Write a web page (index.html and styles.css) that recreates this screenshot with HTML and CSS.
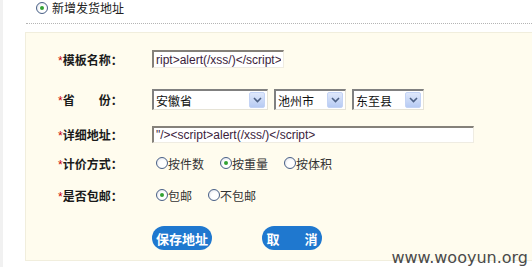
FILE: index.html
```html
<!DOCTYPE html>
<html lang="zh-CN">
<head>
  <meta charset="UTF-8">
  <title>新增发货地址</title>
  <link rel="stylesheet" href="styles.css">
</head>
<body>
  <div class="page">
    <div class="head">
      <span class="radio on"></span>
      <span class="head-text">新增发货地址</span>
    </div>

    <div class="panel">
      <div class="row r1">
        <label class="lbl"><i>*</i>模板名称：</label>
        <input class="text name" type="text" value="ript&gt;alert(/xss/)&lt;/script&gt;" readonly>
      </div>

      <div class="row r2">
        <label class="lbl"><i>*</i>省&emsp;&emsp;份：</label>
        <div class="selects">
          <div class="select prov"><span>安徽省</span><b class="arrow"><svg width="9" height="6" viewBox="0 0 9 6"><path d="M1 1 L4.5 4.5 L8 1" fill="none" stroke="#4d6185" stroke-width="1.6"/></svg></b></div>
          <div class="select city"><span>池州市</span><b class="arrow"><svg width="9" height="6" viewBox="0 0 9 6"><path d="M1 1 L4.5 4.5 L8 1" fill="none" stroke="#4d6185" stroke-width="1.6"/></svg></b></div>
          <div class="select county"><span>东至县</span><b class="arrow"><svg width="9" height="6" viewBox="0 0 9 6"><path d="M1 1 L4.5 4.5 L8 1" fill="none" stroke="#4d6185" stroke-width="1.6"/></svg></b></div>
        </div>
      </div>

      <div class="row r3">
        <label class="lbl"><i>*</i>详细地址：</label>
        <input class="text addr" type="text" value="&quot;/&gt;&lt;script&gt;alert(/xss/)&lt;/script&gt;" readonly>
      </div>

      <div class="row r4">
        <label class="lbl"><i>*</i>计价方式：</label>
        <div class="opts">
          <span class="opt"><span class="radio"></span>按件数</span>
          <span class="opt"><span class="radio on"></span>按重量</span>
          <span class="opt"><span class="radio"></span>按体积</span>
        </div>
      </div>

      <div class="row r5">
        <label class="lbl"><i>*</i>是否包邮：</label>
        <div class="opts">
          <span class="opt"><span class="radio on"></span>包邮</span>
          <span class="opt"><span class="radio"></span>不包邮</span>
        </div>
      </div>

      <div class="row r6">
        <span class="lbl"></span>
        <div class="btns">
          <button class="btn">保存地址</button>
          <button class="btn cancel">取<span class="sp"></span>消</button>
        </div>
      </div>
    </div>

    <div class="mark">www.wooyun.org</div>
  </div>
</body>
</html>
```

FILE: styles.css
```css
html, body {
  margin: 0;
  padding: 0;
  background: #ffffff;
}
body {
  font-family: "Noto Sans CJK SC", "Liberation Sans", sans-serif;
  font-size: 12px;
  color: #333;
}
.page {
  position: relative;
  width: 532px;
  height: 267px;
  overflow: hidden;
  border-left: 3px solid #f1f1f1;
  box-sizing: border-box;
}
.head {
  display: flex;
  align-items: center;
  height: 15px;
  padding-left: 33px;
  gap: 4px;
}
.head-text {
  font-size: 12px;
  line-height: 15px;
  color: #222;
}
.page::before {
  content: "";
  position: absolute;
  left: 23px;
  right: 0;
  top: 23px;
  border-top: 1px dotted #b5b5b5;
}

.panel {
  margin-top: 17px;
  margin-left: 22px;
  height: 229px;
  background: #fffcee;
  border: 1px solid #f1eedd;
  border-right: none;
  box-sizing: border-box;
  padding-top: 7px;
}
.row {
  display: flex;
  align-items: center;
}
.r1 { height: 38px; }
.r2 { height: 43px; }
.r3 { height: 27px; }
.r4 { height: 30px; }
.r5 { height: 34px; }
.r6 { height: 49px; align-items: flex-start; padding-top: 14px; box-sizing: border-box; }

.lbl {
  width: 94px;
  padding-left: 32px;
  flex: none;
  font-weight: bold;
  font-size: 12px;
  color: #1a1a1a;
  white-space: nowrap;
}
.lbl i {
  font-style: normal;
  font-weight: normal;
  color: #c00;
  font-family: "Liberation Sans", sans-serif;
}

.text {
  box-sizing: border-box;
  height: 18px;
  margin: 0;
  padding: 0 2px;
  font-family: "Liberation Sans", Arial, sans-serif;
  font-size: 12px;
  color: #3b1d3b;
  background: #fff;
  border-top: 2px solid #85817a;
  border-left: 2px solid #85817a;
  border-right: 1px solid #efece2;
  border-bottom: 1px solid #efece2;
  outline: none;
}
.name { width: 132px; }
.addr { width: 322px; height: 17px; }

.selects {
  display: flex;
  gap: 6px;
}
.select {
  box-sizing: border-box;
  height: 21px;
  display: flex;
  align-items: center;
  justify-content: space-between;
  background: #fff;
  border-top: 2px solid #808080;
  border-left: 2px solid #808080;
  border-right: 1px solid #e6e3d6;
  border-bottom: 1px solid #e6e3d6;
  padding-left: 2px;
  padding-right: 2px;
  font-size: 12px;
  color: #111;
}
.prov { width: 116px; }
.city { width: 72px; }
.county { width: 72px; }
.arrow {
  width: 16px;
  height: 16px;
  display: flex;
  align-items: center;
  justify-content: center;
  background: linear-gradient(#dfe8fb, #b7cbf3);
  border: 1px solid #c3d3f5;
  box-sizing: border-box;
  border-radius: 2px;
}

.opts {
  display: flex;
  gap: 16px;
  padding-left: 4px;
}
.opt {
  display: flex;
  align-items: center;
  color: #333;
  font-size: 12px;
}
.radio {
  width: 12px;
  height: 12px;
  box-sizing: border-box;
  border-radius: 50%;
  border: 1px solid #485f86;
  background: radial-gradient(circle at 60% 60%, #ffffff 40%, #d9dde6 100%);
  display: inline-flex;
  align-items: center;
  justify-content: center;
  flex: none;
}
.radio.on::after {
  content: "";
  width: 4px;
  height: 4px;
  border-radius: 50%;
  background: #33a233;
}

.btns {
  display: flex;
  gap: 50px;
}
.btn {
  width: 60px;
  height: 24px;
  border: none;
  border-radius: 12px;
  background: #1f78cf;
  color: #fff;
  font-family: "Noto Sans CJK SC", sans-serif;
  font-size: 13px;
  font-weight: bold;
  padding: 0;
  display: flex;
  align-items: center;
  justify-content: center;
}
.sp {
  display: inline-block;
  width: 25px;
}

.mark {
  position: absolute;
  right: 4px;
  bottom: 0;
  line-height: 19px;
  font-family: "DejaVu Sans", sans-serif;
  font-size: 16px;
  color: #4a4a4a;
}
```
